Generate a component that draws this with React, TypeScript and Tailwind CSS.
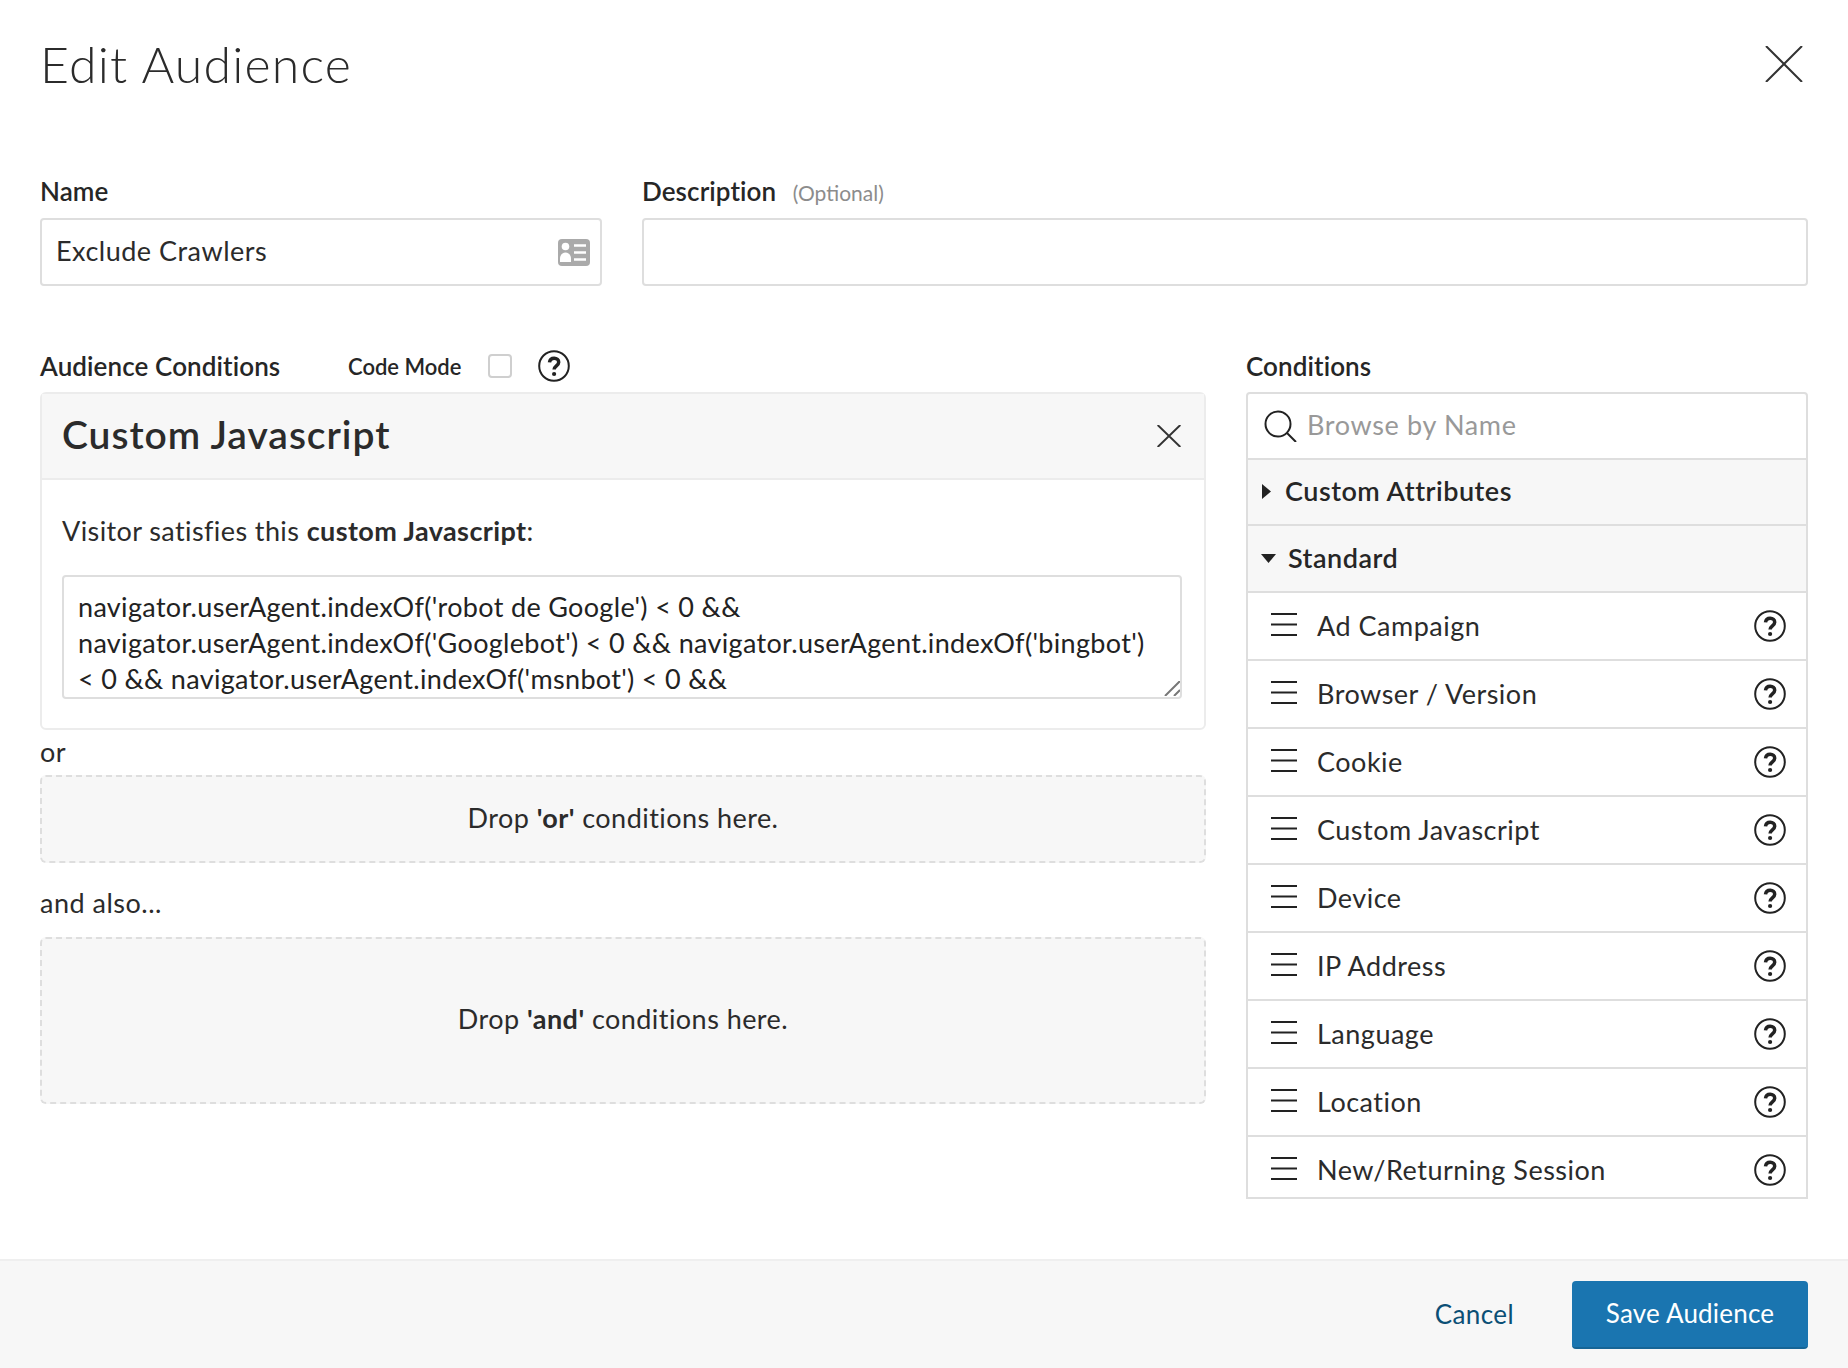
import type { ReactNode } from 'react';

const CONDITIONS = [
  'Ad Campaign',
  'Browser / Version',
  'Cookie',
  'Custom Javascript',
  'Device',
  'IP Address',
  'Language',
  'Location',
  'New/Returning Session',
];

const CODE = `navigator.userAgent.indexOf('robot de Google') < 0 &&
navigator.userAgent.indexOf('Googlebot') < 0 && navigator.userAgent.indexOf('bingbot')
< 0 && navigator.userAgent.indexOf('msnbot') < 0 &&`;

function HelpIcon() {
  return (
    <svg viewBox="0 0 32 32" className="h-8 w-8 shrink-0" fill="none" stroke="#222">
      <circle cx="16" cy="16" r="14.8" strokeWidth="2" />
      <path d="M11.500 12.400c.3-2.600 2.200-4.100 4.700-4.100 2.600 0 4.500 1.600 4.500 3.900 0 3.500-4.600 3.700-4.600 7.300" strokeWidth="3.500" />
      <circle cx="16.100" cy="24" r="2.100" fill="#222" stroke="none" />
    </svg>
  );
}

function CloseIcon({ className }: { className: string }) {
  return (
    <svg viewBox="0 0 38 36" preserveAspectRatio="none" className={className} fill="none" stroke="#333" strokeWidth="2">
      <path d="M1 0 37 36M37 0 1 36" vectorEffect="non-scaling-stroke" />
    </svg>
  );
}

function CardIcon() {
  return (
    <svg viewBox="0 0 32 27" className="h-[27px] w-8">
      <rect width="32" height="27" rx="4" fill="#aaa" />
      <circle cx="7.500" cy="7.500" r="3.800" fill="#fff" />
      <path d="M2 23v-3.500c0-3.500 2.500-6 5.500-6s5.500 2.500 5.500 6V23z" fill="#fff" />
      <path d="M16 6.500h12M16 13.500h12M16 20.500h12" stroke="#fff" strokeWidth="2.500" />
    </svg>
  );
}

function Label({ children, className = '' }: { children: ReactNode; className?: string }) {
  return <div className={`h-9 text-[26px] leading-9 font-semibold tracking-[0.1px] text-[#262626] ${className}`}>{children}</div>;
}

function DropZone({ className, word }: { className: string; word: string }) {
  return (
    <div className={`flex items-center justify-center rounded-md border-2 border-dashed border-[#dedede] bg-[#f7f7f7] pb-[2px] text-[27px] tracking-[0.45px] ${className}`}>
      <span>
        Drop <b className="font-bold">'{word}'</b> conditions here.
      </span>
    </div>
  );
}

function GroupRow({ open, children }: { open: boolean; children: ReactNode }) {
  return (
    <div className={`flex items-center border-b-2 border-[#dedede] bg-[#f7f7f7] pb-[1px] pl-[13px] text-[27px] font-semibold tracking-[0.5px] text-[#262626] ${open ? 'h-[67px]' : 'h-[66px]'}`}>
      {open ? (
        <svg viewBox="0 0 15 9" className="mr-[12px] h-[9px] w-[15px]">
          <path d="M0 0h15L7.500 9z" fill="#222" />
        </svg>
      ) : (
        <svg viewBox="0 0 9 15" className="mr-[14px] ml-[1px] h-[15px] w-[9px]">
          <path d="M0 0v15l9-7.500z" fill="#222" />
        </svg>
      )}
      {children}
    </div>
  );
}

export default function App() {
  return (
    <div className="flex h-[1368px] w-[1848px] flex-col overflow-hidden bg-white text-[#2b2b2b] [font-family:Lato,sans-serif]">
      <div className="flex-1 px-10">
        <div className="flex h-[130px] items-center justify-between">
          <h1 className="mb-[2px] text-[50px] leading-[60px] font-light tracking-[1.2px]">Edit Audience</h1>
          <CloseIcon className="mr-[5px] mb-[2px] h-9 w-[38px]" />
        </div>

        <div className="mt-[43px] flex gap-10">
          <div className="w-[562px]">
            <Label className="mb-[9px]">Name</Label>
            <div className="flex h-[68px] items-center justify-between rounded border-2 border-[#dedede] pr-[10px] pl-[14px] text-[27px] tracking-[0.5px]">
              <span className="mb-[2px]">Exclude Crawlers</span>
              <CardIcon />
            </div>
          </div>
          <div className="flex-1">
            <Label className="mb-[9px]">
              Description <span className="ml-[10px] text-[21px] font-normal tracking-normal text-[#8c8c8c]">(Optional)</span>
            </Label>
            <div className="h-[68px] rounded border-2 border-[#dedede]" />
          </div>
        </div>

        <div className="mt-[62px] flex gap-10">
          <div className="flex-1">
            <div className="mb-2 flex h-9 items-center">
              <Label className="w-[308px]">Audience Conditions</Label>
              <span className="w-[140px] text-[22px] font-semibold text-[#262626]">Code Mode</span>
              <span className="mr-[26px] h-6 w-6 rounded border-2 border-[#cfcfcf]" />
              <HelpIcon />
            </div>

            <div className="rounded-md border-2 border-[#ececec]">
              <div className="flex h-[86px] items-center justify-between border-b-2 border-[#ececec] bg-[#f7f7f7] pr-[23px] pl-5">
                <span className="mb-[3px] text-[39px] font-semibold tracking-[0.95px] text-[#2b2b2b]">Custom Javascript</span>
                <CloseIcon className="h-[22px] w-6" />
              </div>
              <div className="pt-[33px] pr-[22px] pb-[29px] pl-5">
                <p className="mb-[26px] text-[27px] leading-9 tracking-[0.4px]">
                  Visitor satisfies this <b className="font-bold">custom Javascript</b>:
                </p>
                <div className="relative">
                  <textarea
                    readOnly
                    value={CODE}
                    className="block h-[124px] w-full resize-none overflow-hidden rounded border-2 border-[#dedede] px-[14px] pt-[12px] text-[27px] leading-9 tracking-[0.33px] whitespace-pre text-[#222] outline-none"
                  />
                  <svg viewBox="0 0 16 15" className="absolute right-[2px] bottom-[3px] h-[15px] w-4" stroke="#777" strokeWidth="2">
                    <path d="M1 15 16 0M10 15l6-6" />
                  </svg>
                </div>
              </div>
            </div>

            <div className="mt-1 mb-[5px] text-[27px] leading-9 tracking-[0.5px]">or</div>
            <DropZone className="h-[88px]" word="or" />
            <div className="mt-[22px] mb-4 text-[27px] leading-9 tracking-[0.5px]">and also...</div>
            <DropZone className="h-[167px]" word="and" />
          </div>

          <div className="w-[562px]">
            <Label className="mb-2">Conditions</Label>
            <div className="h-[807px] overflow-hidden rounded-t border-2 border-[#dedede]">
              <div className="flex h-[66px] items-center border-b-2 border-[#dedede] pb-[2px] pl-[16px] text-[27px] tracking-[0.65px] text-[#999]">
                <svg viewBox="0 0 33 32" className="mt-[2px] mr-[10px] h-8 w-[33px]" fill="none" stroke="#222" strokeWidth="2">
                  <circle cx="14" cy="14" r="12.500" />
                  <path d="m23 23 9 9" />
                </svg>
                Browse by Name
              </div>
              <GroupRow open={false}>Custom Attributes</GroupRow>
              <GroupRow open>Standard</GroupRow>
              {CONDITIONS.map((name) => (
                <div key={name} className="flex h-[68px] shrink-0 items-center border-b-2 border-[#dedede] pr-5 pl-[23px] text-[27px] tracking-[0.5px]">
                  <svg viewBox="0 0 26 24" className="mr-5 mb-1 h-6 w-[26px]" stroke="#222" strokeWidth="2">
                    <path d="M0 2h26M0 12.500h26M0 23h26" />
                  </svg>
                  <span className="flex-1">{name}</span>
                  <HelpIcon />
                </div>
              ))}
            </div>
          </div>
        </div>
      </div>

      <div className="flex h-[109px] items-center justify-end border-t-2 border-[#efefef] bg-[#f7f7f7] pr-10">
        <span className="mr-[58px] text-[26px] tracking-[0.4px] text-[#0b4f75]">Cancel</span>
        <button className="h-[68px] w-[236px] rounded border-b-2 border-[#166596] bg-[#1a75b0] text-[26px] tracking-[0.2px] text-white">
          Save Audience
        </button>
      </div>
    </div>
  );
}
